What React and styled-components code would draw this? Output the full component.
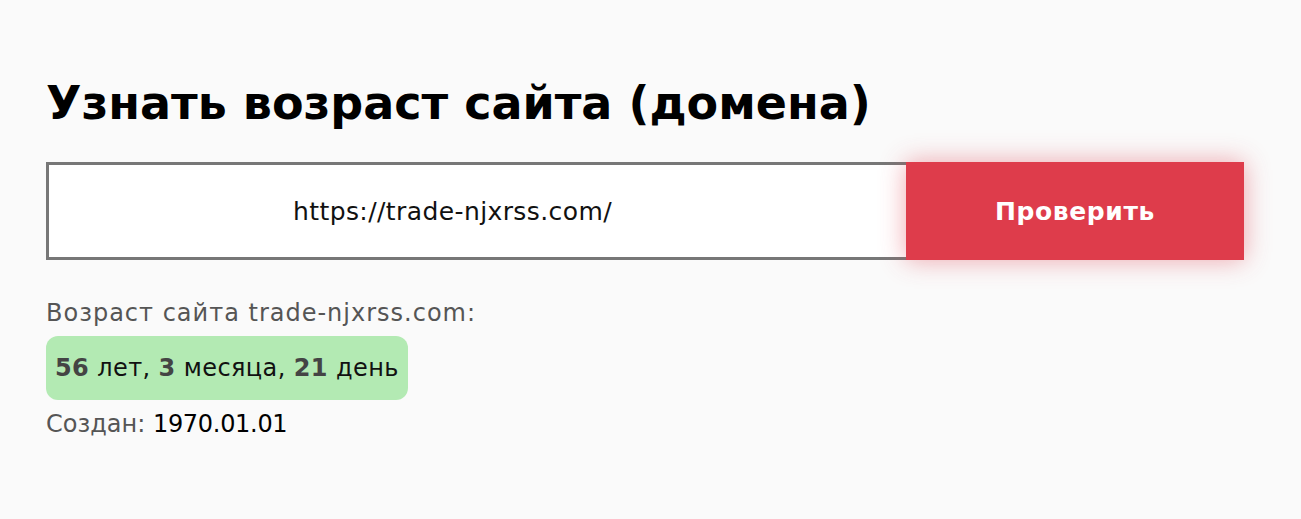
import styled, { createGlobalStyle } from 'styled-components';

const Global = createGlobalStyle`
  body {
    margin: 0;
    background: #fafafa;
    font-family: "DejaVu Sans", "Noto Sans", sans-serif;
  }
`;

const Page = styled.div`
  padding: 74px 46px 0 46px;
  width: 1198px;
`;

const Title = styled.h1`
  font-size: 46px;
  font-weight: 700;
  color: #000;
  margin: 0 0 30px 0;
  line-height: 58px;
`;

const Form = styled.div`
  display: flex;
  height: 98px;
`;

const Input = styled.div`
  flex: 0 0 860px;
  box-sizing: border-box;
  border: 3px solid #777;
  border-right: none;
  background: #fff;
  display: flex;
  align-items: center;
  justify-content: center;
  padding-right: 50px;
  font-size: 25px;
  letter-spacing: 0.4px;
  color: #111;
`;

const Button = styled.button`
  flex: 0 0 338px;
  border: none;
  background: #de3c4b;
  color: #fff;
  font-family: inherit;
  font-size: 25px;
  font-weight: 700;
  letter-spacing: 0.6px;
  box-shadow: 0 0 24px rgba(222, 60, 75, 0.45);
  cursor: pointer;
`;

const Label = styled.div`
  margin-top: 38px;
  font-size: 24px;
  letter-spacing: 1px;
  color: #555;
  line-height: 30px;
`;

const Age = styled.div`
  display: inline-block;
  margin-top: 8px;
  padding: 0 9px;
  height: 64px;
  line-height: 64px;
  border-radius: 12px;
  background: #b3eab3;
  font-size: 24px;
  letter-spacing: 0.4px;
  color: #111;
`;

const Num = styled.b`
  color: #444;
`;

const Created = styled.div`
  margin-top: 8px;
  font-size: 24px;
  color: #555;
  line-height: 32px;
`;

const Date = styled.span`
  color: #000;
  letter-spacing: -0.3px;
`;

export default function App() {
  return (
    <>
      <Global />
      <Page>
        <Title>Узнать возраст сайта (домена)</Title>
        <Form>
          <Input>https://trade-njxrss.com/</Input>
          <Button>Проверить</Button>
        </Form>
        <Label>Возраст сайта trade-njxrss.com:</Label>
        <Age>
          <Num>56</Num> лет, <Num>3</Num> месяца, <Num>21</Num> день
        </Age>
        <Created>
          Создан: <Date>1970.01.01</Date>
        </Created>
      </Page>
    </>
  );
}
